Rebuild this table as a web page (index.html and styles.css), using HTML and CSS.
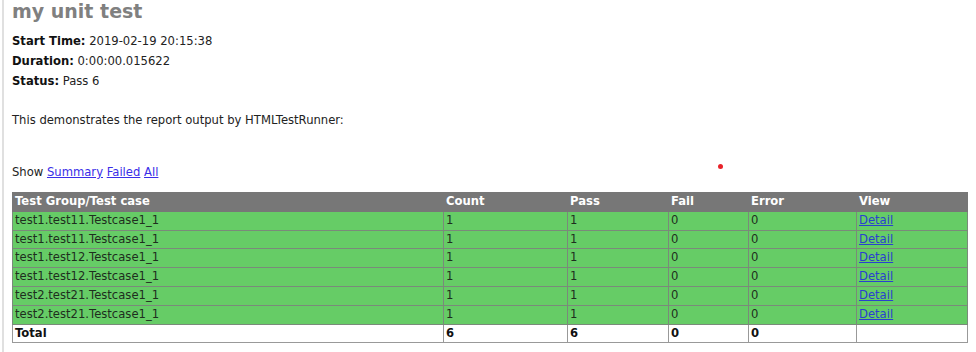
FILE: index.html
```html
<!DOCTYPE html>
<html>
<head>
<meta charset="utf-8">
<title>my unit test</title>
<link rel="stylesheet" href="styles.css">
</head>
<body>
<div class="page">
  <h1 class="title">my unit test</h1>
  <div class="heading">
    <p class="attribute"><strong>Start Time:</strong> 2019-02-19 20:15:38</p>
    <p class="attribute"><strong>Duration:</strong> 0:00:00.015622</p>
    <p class="attribute"><strong>Status:</strong> Pass 6</p>
  </div>
  <p class="description">This demonstrates the report output by HTMLTestRunner:</p>
  <p class="show">Show <a href="#">Summary</a> <a href="#">Failed</a> <a href="#">All</a><span class="dot"></span></p>
  <table class="result">
    <colgroup>
      <col class="c1"><col class="c2"><col class="c3"><col class="c4"><col class="c5"><col class="c6">
    </colgroup>
    <tr class="header-row">
      <td>Test Group/Test case</td><td>Count</td><td>Pass</td><td>Fail</td><td>Error</td><td>View</td>
    </tr>
    <tr class="pass"><td>test1.test11.Testcase1_1</td><td>1</td><td>1</td><td>0</td><td>0</td><td><a href="#">Detail</a></td></tr>
    <tr class="pass"><td>test1.test11.Testcase1_1</td><td>1</td><td>1</td><td>0</td><td>0</td><td><a href="#">Detail</a></td></tr>
    <tr class="pass"><td>test1.test12.Testcase1_1</td><td>1</td><td>1</td><td>0</td><td>0</td><td><a href="#">Detail</a></td></tr>
    <tr class="pass"><td>test1.test12.Testcase1_1</td><td>1</td><td>1</td><td>0</td><td>0</td><td><a href="#">Detail</a></td></tr>
    <tr class="pass"><td>test2.test21.Testcase1_1</td><td>1</td><td>1</td><td>0</td><td>0</td><td><a href="#">Detail</a></td></tr>
    <tr class="pass"><td>test2.test21.Testcase1_1</td><td>1</td><td>1</td><td>0</td><td>0</td><td><a href="#">Detail</a></td></tr>
    <tr class="total-row"><td>Total</td><td>6</td><td>6</td><td>0</td><td>0</td><td>&nbsp;</td></tr>
  </table>
</div>
</body>
</html>
```
FILE: styles.css
```css
html, body {
  margin: 0;
  padding: 0;
  background: #fff;
}
body {
  font-family: "DejaVu Sans", Verdana, sans-serif;
  font-size: 11.6px;
  color: #222;
}
.page {
  position: relative;
  margin-left: 2px;
  border-left: 2px solid #e0e0e0;
  padding-left: 8px;
  min-height: 352px;
  box-sizing: border-box;
}
.title {
  margin: 0;
  font-size: 19px;
  line-height: 22px;
  font-weight: bold;
  color: #808080;
  height: 31px;
}
.heading {
  margin: 0;
}
.attribute {
  margin: 0;
  line-height: 20px;
}
.attribute strong {
  color: #111;
}
.description {
  margin: 19px 0 0 0;
  line-height: 20px;
}
.show {
  margin: 32px 0 0 0;
  line-height: 20px;
}
.show a {
  color: #3a2ee8;
}
.dot {
  position: absolute;
  left: 714px;
  top: 164px;
  width: 5px;
  height: 5px;
  border-radius: 50%;
  background: #e8222a;
}
.result {
  margin-top: 10px;
  border-collapse: collapse;
  border: 1px solid #d8d8d8;
  width: 955px;
  table-layout: fixed;
}
.c1 { width: 431px; }
.c2 { width: 124px; }
.c3 { width: 101px; }
.c4 { width: 80px; }
.c5 { width: 108px; }
.c6 { width: 111px; }
.result td {
  border: 1px solid #7a8a7a;
  padding: 2px 2px;
  line-height: 13.8px;
  white-space: nowrap;
  overflow: hidden;
}
.header-row td {
  background: #777;
  color: #fff;
  font-weight: bold;
  border-color: #777;
}
.pass td {
  background: #66cc66;
  color: #1e2e1e;
}
.pass a {
  color: #2a3fd0;
}
.total-row td {
  background: #fff;
  font-weight: bold;
  color: #111;
  border-color: #999;
}
```
